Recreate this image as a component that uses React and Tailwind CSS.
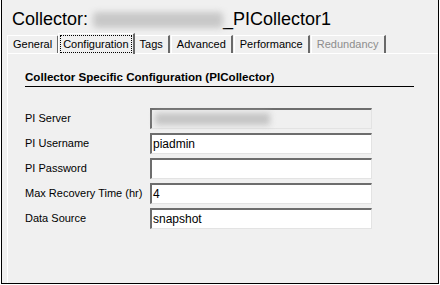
import React from 'react';

const tabs = [
  { label: 'General' },
  { label: 'Configuration', active: true },
  { label: 'Tags' },
  { label: 'Advanced' },
  { label: 'Performance' },
  { label: 'Redundancy', disabled: true },
];

const fields = [
  { label: 'PI Server', value: '', blurred: true },
  { label: 'PI Username', value: 'piadmin' },
  { label: 'PI Password', value: '' },
  { label: 'Max Recovery Time (hr)', value: '4' },
  { label: 'Data Source', value: 'snapshot' },
];

const Tab = ({ label, active, disabled }) => {
  if (active) {
    return (
      <div className="relative z-10 -mb-px h-[21px] px-px pt-px bg-[#f0f0f0] border-l border-t border-white border-r-2 border-r-[#696969] -mx-[2px]">
        <div className="h-[18px] px-[2px] border border-dotted border-black flex items-center text-[11px] text-black leading-none whitespace-nowrap">
          {label}
        </div>
      </div>
    );
  }
  return (
    <div
      className={`h-[18px] px-[5px] flex items-center bg-[#f0f0f0] border-l border-t border-white border-r-2 border-r-[#696969] text-[11px] leading-none whitespace-nowrap ${
        disabled ? 'text-[#8d8d8d]' : 'text-black'
      }`}
    >
      {label}
    </div>
  );
};

export default function App() {
  return (
    <div
      className="ml-px w-[438px] h-[284px] bg-[#f0f0f0] border-l border-r border-b border-black flex flex-col"
      style={{ fontFamily: '"Liberation Sans", Arial, sans-serif' }}
    >
      {/* title */}
      <div className="pl-[10px] pt-[8px] h-[33px] flex items-start text-[18px] leading-[22px] text-black">
        <span>Collector:</span>
        <span className="ml-[5px] mt-[4px] w-[130px] h-[16px] bg-[#c8c8c8] blur-[3px] rounded-sm" />
        <span>_PICollector1</span>
      </div>

      {/* tab strip */}
      <div className="pl-[5px] flex items-end gap-[1px] h-[20px]">
        {tabs.map((t) => (
          <Tab key={t.label} {...t} />
        ))}
      </div>

      {/* panel */}
      <div className="ml-[5px] flex-1 border-l border-t border-white pl-[17px] pr-[24px]">
        <div className="mt-[16px] pb-[2px] border-b border-black text-[11.6px] font-bold text-black leading-[14px] whitespace-nowrap">
          Collector Specific Configuration (PICollector)
        </div>
        <div className="mt-[21px] flex flex-col gap-[4px]">
          {fields.map((f) => (
            <div key={f.label} className="flex items-center h-[21px]">
              <div className="w-[125px] shrink-0 text-[11px] text-black whitespace-nowrap">{f.label}</div>
              <div
                className={`w-[222px] h-[21px] border-t-2 border-l-2 border-t-[#6d6d6d] border-l-[#6d6d6d] border-r border-b border-r-[#e3e3e3] border-b-[#e3e3e3] flex items-center pl-[1px] text-[12px] text-black ${
                  f.blurred ? 'bg-[#f0f0f0]' : 'bg-white'
                }`}
              >
                {f.blurred ? (
                  <span className="ml-[2px] w-[115px] h-[12px] bg-[#c4c4c4] blur-[3px]" />
                ) : (
                  f.value
                )}
              </div>
            </div>
          ))}
        </div>
      </div>
    </div>
  );
}
